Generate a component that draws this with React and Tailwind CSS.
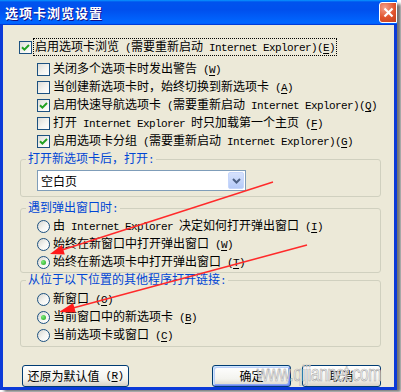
import React from 'react';

const MONO = "font-['Liberation_Mono',monospace] text-[11px] tracking-[-0.6px]";

// SimSun-like mix: CJK at 12px, ASCII runs in a narrow mono face
function Txt({ s, k }) {
  const parts = s.split(/([\x20-\x7e]+)/).filter(Boolean);
  return (
    <>
      {parts.map((p, i) =>
        /^[\x20-\x7e]+$/.test(p) ? (
          <span key={i} className={MONO}>{p}</span>
        ) : (
          <span key={i}>{p}</span>
        )
      )}
      {k && (
        <span className={MONO}>
          (<span className="underline underline-offset-[2px]">{k}</span>)
        </span>
      )}
    </>
  );
}

function Check({ on }) {
  return (
    <span className="w-[13px] h-[13px] shrink-0 border border-[#1c5180] bg-[linear-gradient(135deg,#dcdcd7,#f4f4f0_55%,#ffffff)] flex items-center justify-center">
      {on && (
        <svg width="9" height="9" viewBox="0 0 9 9">
          <path d="M1 4.3 L3.4 6.7 L8 2" fill="none" stroke="#21a121" strokeWidth="2" />
        </svg>
      )}
    </span>
  );
}

function Radio({ on }) {
  return (
    <span className="w-[13px] h-[13px] shrink-0 rounded-full border border-[#1c5180] bg-[linear-gradient(135deg,#d6d6d0,#f6f6f3_55%,#ffffff)] flex items-center justify-center">
      {on && <span className="w-[5px] h-[5px] rounded-full bg-[radial-gradient(circle_at_35%_35%,#7ded79,#21a121)]" />}
    </span>
  );
}

function CheckRow({ on, s, k }) {
  return (
    <div className="h-[18px] flex items-center ml-[34px]">
      <Check on={on} />
      <span className="ml-[3px] whitespace-pre"><Txt s={s} k={k} /></span>
    </div>
  );
}

function RadioRow({ on, s, k }) {
  return (
    <div className="h-[18px] flex items-center ml-[16px]">
      <Radio on={on} />
      <span className="ml-[3px] whitespace-pre"><Txt s={s} k={k} /></span>
    </div>
  );
}

function Group({ title, className, children }) {
  return (
    <fieldset className={`ml-[17px] w-[361px] border border-[#d0d0bf] rounded-[3px] ${className}`}>
      <legend className="ml-[5px] px-[2px] leading-[12px] text-[#0046d5] whitespace-pre">
        <Txt s={title} />
      </legend>
      {children}
    </fieldset>
  );
}

function Btn({ children, className, def }) {
  return (
    <div
      className={`h-[22px] flex items-center justify-center border border-[#003c74] rounded-[3px] bg-[linear-gradient(#ffffff,#f3f3ee_65%,#d8d2c6)] whitespace-pre ${
        def ? 'shadow-[inset_1px_1px_#cee7ff,inset_-1px_-1px_#6982ee,inset_2px_2px_#bccef7,inset_-2px_-2px_#89a7f2]' : ''
      } ${className}`}
    >
      {children}
    </div>
  );
}

export default function App() {
  return (
    <div className="relative w-[401px] h-[392px] bg-white font-['Noto_Sans_CJK_SC',sans-serif] text-[12px] text-black overflow-hidden">
      <div className="w-[397px] h-[388px] flex flex-col shadow-[4px_4px_3px_rgba(0,0,0,0.55)]">
        {/* Title bar */}
        <div className="h-[25px] shrink-0 flex items-start justify-between bg-[linear-gradient(180deg,#0997ff,#0053ee_8%,#0050ee_40%,#0066ff_88%,#0066ff_93%,#005bff_95%,#003dd7_96%,#003dd7)]">
          <span className="pl-[5px] pt-[3px] text-white font-bold text-[13px] tracking-[1px] [text-shadow:1px_1px_#0f1089]">
            选项卡浏览设置
          </span>
          <div className="mt-[2px] w-[18px] h-[21px] border border-white rounded-l-[3px] bg-[radial-gradient(circle_at_30%_25%,#f5a08a,#e0532c_55%,#c4411e)] flex items-center justify-center">
            <svg width="11" height="11" viewBox="0 0 11 11">
              <path d="M1.5 1.5 L9.5 9.5 M9.5 1.5 L1.5 9.5" stroke="#ffffff" strokeWidth="2.2" />
            </svg>
          </div>
        </div>

        {/* Body */}
        <div className="flex-1 flex flex-col bg-[#ece9d8] border-x-[3px] border-b-[3px] border-[#0b3ad8] pt-[13px]">
          <div className="h-[18px] flex items-center ml-[16px]">
            <Check on />
            <span className="ml-[1px] px-[1px] border border-dotted border-black leading-[13px] whitespace-pre">
              <Txt s="启用选项卡浏览 (需要重新启动 Internet Explorer)" k="E" />
            </span>
          </div>

          <div className="mt-[4px] flex flex-col">
            <CheckRow s="关闭多个选项卡时发出警告 " k="W" />
            <CheckRow s="当创建新选项卡时，始终切换到新选项卡 " k="A" />
            <CheckRow on s="启用快速导航选项卡 (需要重新启动 Internet Explorer)" k="Q" />
            <CheckRow s="打开 Internet Explorer 时只加载第一个主页 " k="F" />
            <CheckRow on s="启用选项卡分组 (需要重新启动 Internet Explorer)" k="G" />
          </div>

          <Group title="打开新选项卡后，打开:" className="mt-[2px] pb-[5px]">
            <div className="ml-[16px] mt-[4px] w-[209px] h-[21px] border border-[#7f9db9] bg-white flex items-center justify-between p-[1px]">
              <span className="pl-[2px]">空白页</span>
              <span className="w-[16px] h-[17px] rounded-[2px] border border-[#c6d6fb] bg-[linear-gradient(#d6e2fd,#b5caf8)] flex items-center justify-center">
                <svg width="9" height="6" viewBox="0 0 9 6">
                  <path d="M1 1 L4.5 4.5 L8 1" fill="none" stroke="#4d6185" strokeWidth="2" />
                </svg>
              </span>
            </div>
          </Group>

          <Group title="遇到弹出窗口时:" className="mt-[4px] pb-[1px]">
            <div className="mt-[2px] flex flex-col">
              <RadioRow s="由 Internet Explorer 决定如何打开弹出窗口 " k="I" />
              <RadioRow s="始终在新窗口中打开弹出窗口 " k="W" />
              <RadioRow on s="始终在新选项卡中打开弹出窗口 " k="T" />
            </div>
          </Group>

          <Group title="从位于以下位置的其他程序打开链接:" className="pb-[2px]">
            <div className="mt-[3px] flex flex-col">
              <RadioRow s="新窗口 " k="O" />
              <RadioRow on s="当前窗口中的新选项卡 " k="B" />
              <RadioRow s="当前选项卡或窗口 " k="C" />
            </div>
          </Group>

          <div className="mt-[18px] flex">
            <Btn className="ml-[19px] w-[107px]"><Txt s="还原为默认值 " k="R" /></Btn>
            <Btn def className="ml-[83px] w-[79px]">确定</Btn>
            <Btn className="ml-[11px] w-[79px]">取消</Btn>
          </div>
        </div>
      </div>

      {/* red annotation arrows */}
      <svg className="absolute left-0 top-0 pointer-events-none" width="401" height="392" viewBox="0 0 401 392">
        <line x1="273" y1="182" x2="62" y2="250" stroke="#ff2a2a" strokeWidth="1.4" />
        <polygon points="50,254 64.8,254.5 61.8,244.9" fill="#ff1a1a" />
        <line x1="307" y1="245" x2="73" y2="308" stroke="#ff2a2a" strokeWidth="1.4" />
        <polygon points="59,312 75.7,312.6 73.1,303" fill="#ff1a1a" />
      </svg>

      {/* watermark */}
      <div className="absolute left-[257px] top-[363px] text-[16px] leading-none font-['Liberation_Sans',sans-serif] tracking-[-0.5px] scale-y-[1.35] origin-top text-[#f4f4f4]/80 [-webkit-text-stroke:0.5px_#a8a8a8] pointer-events-none">
        www.qijiannet.com
      </div>
    </div>
  );
}
